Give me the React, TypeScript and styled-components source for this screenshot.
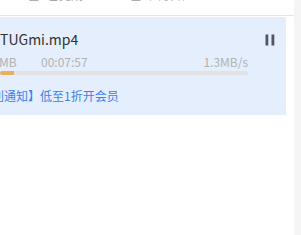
import React from "react";
import styled, { createGlobalStyle } from "styled-components";

const GlobalStyle = createGlobalStyle`
  html, body {
    margin: 0;
    padding: 0;
    background: #ffffff;
    overflow: hidden;
  }
  body {
    font-family: "Noto Sans CJK SC", "Noto Sans", sans-serif;
  }
`;

const Page = styled.div`
  display: flex;
  width: 301px;
  height: 235px;
`;

const Main = styled.div`
  width: 294px;
  display: flex;
  flex-direction: column;
`;

const ScrollTrack = styled.div`
  flex: 1;
  background: #f5f5f5;
`;

const TabBar = styled.div`
  height: 15px;
  border-bottom: 1px solid #e6e6e6;
  display: flex;
  align-items: flex-end;
  overflow: hidden;
`;

const Tab = styled.div<{ $left: number }>`
  display: flex;
  align-items: center;
  gap: 8px;
  margin-left: ${(p) => p.$left}px;
  margin-bottom: 12px;
  color: #a6a6a6;
  font-size: 12px;
  line-height: 16px;
`;

const TabIcon = styled.span`
  width: 8px;
  height: 10px;
  border: 1px solid #b0b0b0;
  border-radius: 1px;
`;

const Card = styled.div`
  margin: 1px 8px 0 0;
  height: 98px;
  background: #e4eefc;
  padding: 12px 11px 0 0;
  box-sizing: border-box;
  overflow: hidden;
`;

const TitleRow = styled.div`
  display: flex;
  align-items: center;
  justify-content: space-between;
  height: 20px;
`;

const FileName = styled.div`
  font-size: 14px;
  line-height: 20px;
  color: #333333;
  white-space: nowrap;
`;

const PauseButton = styled.button`
  border: 0;
  padding: 0;
  margin-top: 1px;
  background: none;
  display: flex;
  color: #555561;
  cursor: pointer;
`;

const MetaRow = styled.div`
  width: 248px;
  margin-top: 5px;
  display: flex;
  align-items: center;
  font-size: 12px;
  line-height: 16px;
  color: #b3b3b3;
`;

const Size = styled.span`
  width: 42px;
  margin-left: -1px;
`;

const Speed = styled.span`
  margin-left: auto;
`;

const Track = styled.div`
  width: 248px;
  height: 4px;
  margin-top: 1px;
  border-radius: 2px;
  background: #e2e2e2;
  overflow: hidden;
`;

const Fill = styled.div`
  height: 100%;
  background: #e8b05c;
`;

const Promo = styled.a`
  display: block;
  margin: 13px 0 0 -32px;
  font-size: 12px;
  line-height: 16px;
  color: #3c82f0;
  text-decoration: none;
  white-space: nowrap;
`;

export default function App() {
  const progress = 14 / 248;
  return (
    <>
      <GlobalStyle />
      <Page>
        <Main>
          <TabBar>
            <Tab $left={29}>
              <TabIcon />
              已完成
            </Tab>
            <Tab $left={48}>
              <TabIcon />
              回收站
            </Tab>
          </TabBar>
          <Card>
            <TitleRow>
              <FileName>TUGmi.mp4</FileName>
              <PauseButton aria-label="暂停">
                <svg width="10" height="12" viewBox="0 0 10 12">
                  <rect x="0.5" y="0.5" width="2.8" height="11" fill="currentColor" />
                  <rect x="6.5" y="0.5" width="2.8" height="11" fill="currentColor" />
                </svg>
              </PauseButton>
            </TitleRow>
            <MetaRow>
              <Size>MB</Size>
              <span>00:07:57</span>
              <Speed>1.3MB/s</Speed>
            </MetaRow>
            <Track>
              <Fill style={{ width: `${progress * 100}%` }} />
            </Track>
            <Promo href="#">【福利通知】低至1折开会员</Promo>
          </Card>
        </Main>
        <ScrollTrack />
      </Page>
    </>
  );
}
